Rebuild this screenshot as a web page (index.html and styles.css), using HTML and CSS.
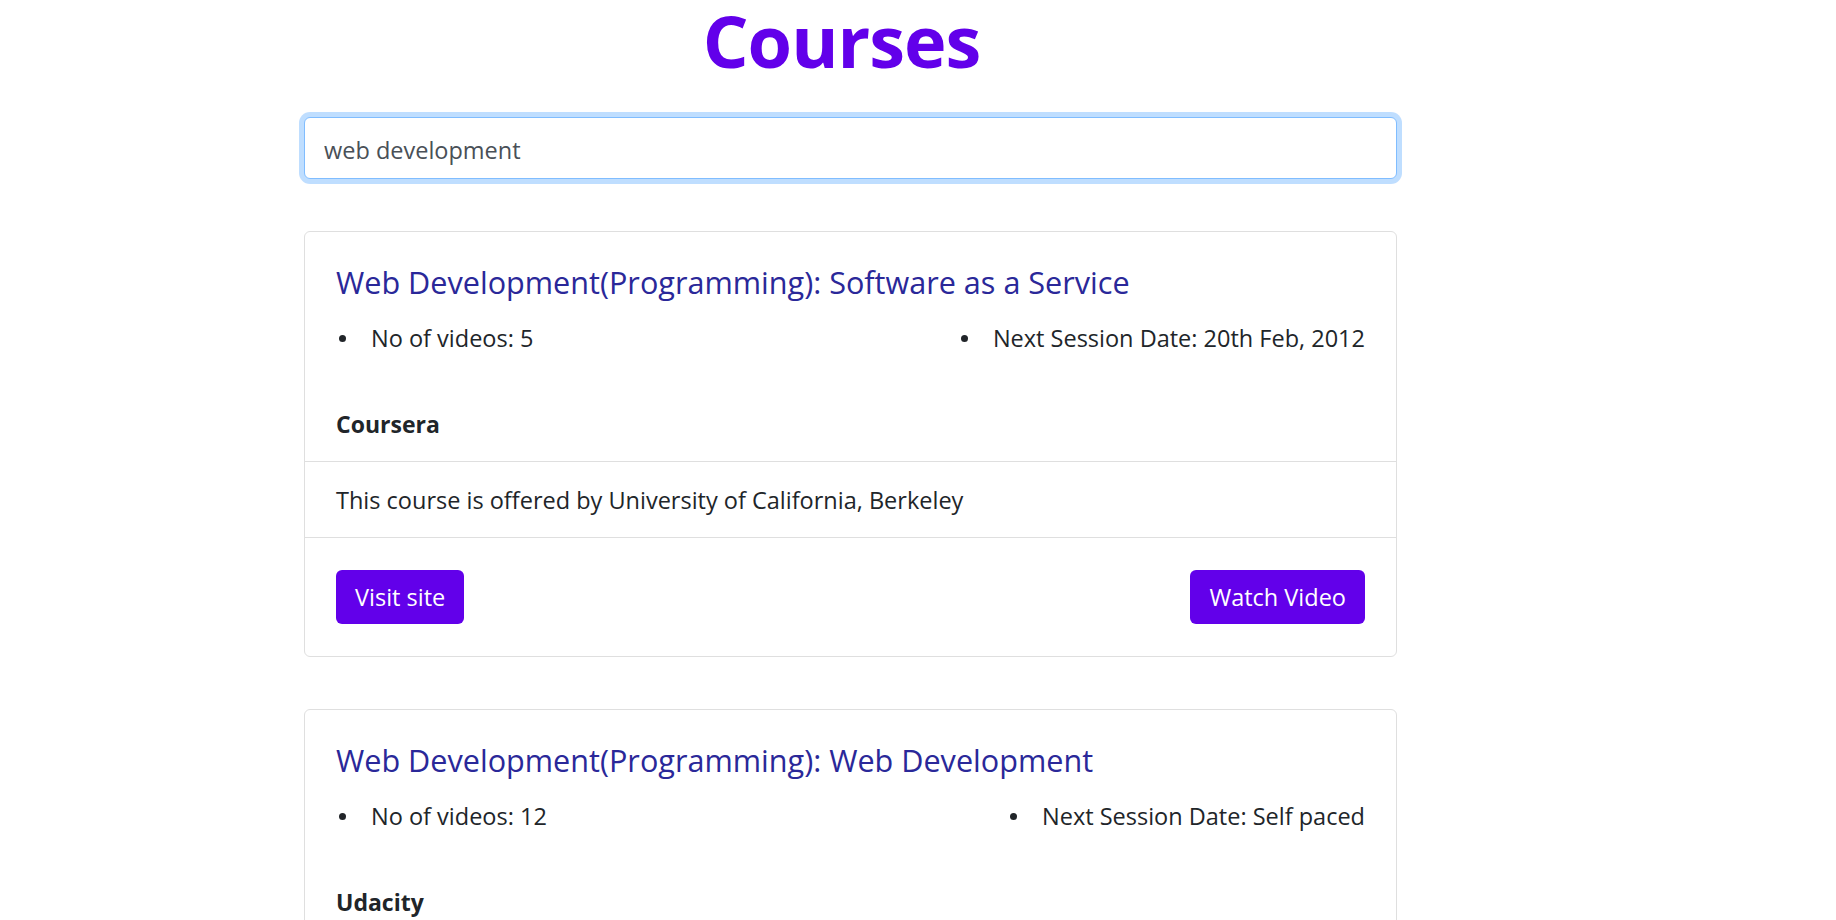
FILE: index.html
```html
<!DOCTYPE html>
<html lang="en">
<head>
<meta charset="utf-8">
<title>Courses</title>
<link rel="stylesheet" href="styles.css">
</head>
<body>
<main class="page">
  <h1 class="page-title">Courses</h1>
  <input class="search" type="text" value="web development" aria-label="Search courses">
  <section class="course-list">
    <article class="card">
      <div class="card-body">
        <h5 class="card-title">Web Development(Programming): Software as a Service</h5>
        <ul class="meta">
          <li>No of videos: 5</li>
          <li>Next Session Date: 20th Feb, 2012</li>
        </ul>
        <h6 class="provider">Coursera</h6>
      </div>
      <div class="card-desc">This course is offered by University of California, Berkeley</div>
      <div class="card-actions">
        <button class="btn" type="button">Visit site</button>
        <button class="btn" type="button">Watch Video</button>
      </div>
    </article>
    <article class="card">
      <div class="card-body">
        <h5 class="card-title">Web Development(Programming): Web Development</h5>
        <ul class="meta">
          <li>No of videos: 12</li>
          <li>Next Session Date: Self paced</li>
        </ul>
        <h6 class="provider">Udacity</h6>
      </div>
      <div class="card-desc">This course is offered by Udacity</div>
      <div class="card-actions">
        <button class="btn" type="button">Visit site</button>
        <button class="btn" type="button">Watch Video</button>
      </div>
    </article>
  </section>
</main>
</body>
</html>
```

FILE: styles.css
```css
html {
  scrollbar-width: none;
}

body {
  margin: 0;
  background: #ffffff;
  color: #212529;
  font-family: "Open Sans", "Noto Sans", "Liberation Sans", sans-serif;
  font-size: 23.5px;
  line-height: 36px;
}

.page {
  width: 1093px;
  margin-left: 304px;
  padding-bottom: 40px;
}

.page-title {
  margin: 0;
  padding-right: 18px;
  text-align: center;
  font-size: 72px;
  line-height: 80px;
  font-weight: 700;
  letter-spacing: -1px;
  color: #6200ea;
}

.search {
  display: block;
  box-sizing: border-box;
  width: 100%;
  height: 62px;
  margin: 37px 0 0;
  padding: 4px 19px 0;
  border: 1px solid #80bdff;
  border-radius: 6px;
  box-shadow: 0 0 0 5px rgba(0, 123, 255, 0.25);
  outline: none;
  font-family: inherit;
  font-size: 23.5px;
  color: #495057;
  background: #ffffff;
}

.course-list {
  display: flex;
  flex-direction: column;
  gap: 52px;
  margin-top: 52px;
}

.card {
  border: 1px solid #dfdfdf;
  border-radius: 6px;
  background: #ffffff;
}

.card-body {
  padding: 30px 31px 19px;
}

.card-title {
  margin: 0 0 18px;
  font-size: 30.6px;
  line-height: 40px;
  font-weight: 500;
  color: #2a2899;
}

.meta {
  display: flex;
  justify-content: space-between;
  margin: 0 0 50px;
  padding: 0;
  list-style: none;
}

.meta li {
  display: flex;
  align-items: center;
}

.meta li::before {
  content: "";
  width: 7px;
  height: 7px;
  margin: 0 25px 0 3px;
  border-radius: 50%;
  background: #212529;
}

.provider {
  margin: 0;
  font-size: 23px;
  line-height: 36px;
  font-weight: 700;
}

.card-desc {
  padding: 20px 31px 19px;
  border-top: 1px solid #dfdfdf;
}

.card-actions {
  display: flex;
  justify-content: space-between;
  padding: 32px 31px 32px;
  border-top: 1px solid #dfdfdf;
}

.btn {
  height: 54px;
  padding: 0 19px;
  border: none;
  border-radius: 6px;
  background: #6200ea;
  color: #ffffff;
  font-family: inherit;
  font-size: 23.5px;
  line-height: 54px;
  cursor: pointer;
}
```
